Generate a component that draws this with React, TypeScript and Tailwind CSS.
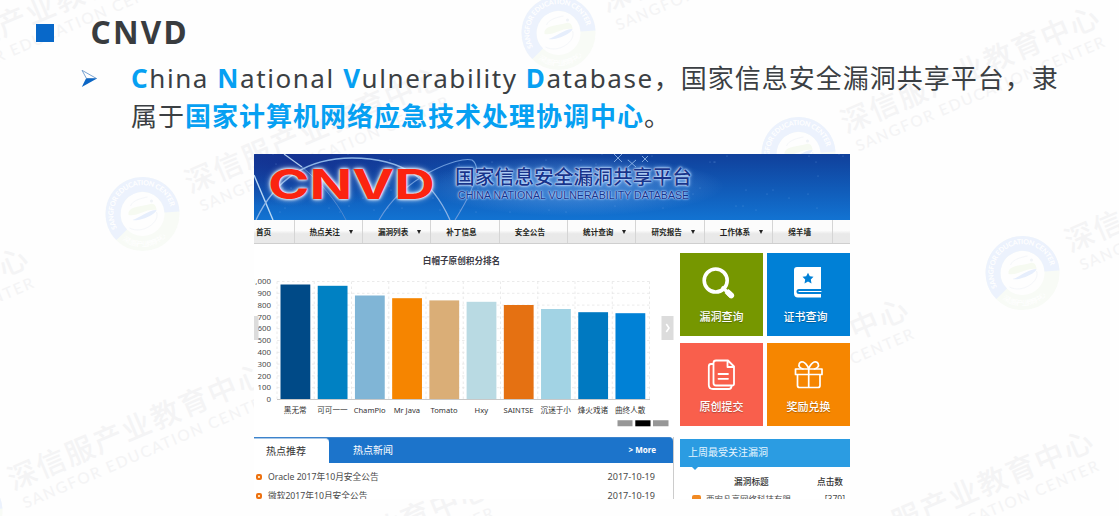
import React from "react";

const marks: [number, number][] = [
  [200, 178],
  [856, 118],
  [616, -3],
  [1080, 237],
  [23, 475],
  [-215, 359],
  [-73, 58],
  [665, 410],
  [850, 542],
  [245, 589],
];

function Watermark() {
  return (
    <svg className="absolute inset-0" width="1119" height="516" viewBox="0 0 1119 516">
      <defs>
        <path id="ring" d="M-23.3 17.5 A29 29 0 1 1 27.5 9" />
        <path id="ringLow" d="M-20 26 A33 33 0 0 0 30 13" />
      </defs>
      {marks.map(([x, y], i) => (
        <g key={i} transform={`translate(${x} ${y})`}>
          <g transform="translate(-57.5 36)">
            <circle r="29.5" fill="none" stroke="#f8fbf6" strokeWidth="15" />
            <path d="M-20.8 20.8 A29.5 29.5 0 1 1 29.5 -2" fill="none" stroke="#ecf2fd" strokeWidth="15" />
            <text fill="#fff" fontSize="7" fontWeight="700" fontFamily="Lato, sans-serif">
              <textPath href="#ring" textLength="98" startOffset="4">SANGFOR EDUCATION CENTER</textPath>
            </text>
            <text fill="#fff" fontSize="7" fontFamily="'Noto Sans CJK SC', sans-serif">
              <textPath href="#ringLow" textLength="48">深信服产业教育中心</textPath>
            </text>
            <path d="M-14 1C-15-8-2-7 8-10C13-11 14-6 14-4C4-6-5 3-14 1" fill="#f6faf1" />
            <path d="M-10 6C-4 8 13 1 14-4C6-4-3 4-10 6" fill="#e6eefc" />
            <path d="M14-2C18 8 0 21-13 14M-12-8C-10-14 0-16 5-17" fill="none" stroke="#f5f7fa" />
            <circle cx="9" cy="-13" r="1.5" fill="#f0f3f7" />
          </g>
          <g transform="rotate(-23.1)" fill="#f4f4f5">
            <text x="-15" y="10.5" fontSize="29" fontWeight="500" fontFamily="'Noto Sans CJK SC', sans-serif" textLength="277">
              深信服产业教育中心
            </text>
            <text x="-11" y="32" fontSize="15.5" fontWeight="500" fontFamily="Lato, sans-serif" textLength="269">
              SANGFOR EDUCATION CENTER
            </text>
          </g>
        </g>
      ))}
    </svg>
  );
}

function Key({ children }: { children: React.ReactNode }) {
  return <b className="font-bold text-[#06a0f2]">{children}</b>;
}

function Banner() {
  return (
    <div className="relative h-[66px] overflow-hidden bg-linear-to-b from-[#10409b] to-[#1273d2]">
      <svg className="absolute inset-0" width="596" height="66" fill="none">
        <defs>
          <radialGradient id="shade">
            <stop offset="0" stopColor="#16298a" stopOpacity=".7" />
            <stop offset="1" stopColor="#16298a" stopOpacity="0" />
          </radialGradient>
          <radialGradient id="glow">
            <stop offset="0.3" stopColor="#7fb4f2" stopOpacity=".42" />
            <stop offset="1" stopColor="#7fb4f2" stopOpacity="0" />
          </radialGradient>
        </defs>
        <ellipse cx="40" cy="8" rx="170" ry="45" fill="url(#shade)" />
        <ellipse cx="320" cy="32" rx="150" ry="30" fill="url(#glow)" />
        <path d="M0 21L19 66" stroke="#b9d8f5" strokeWidth="1.4" />
        <path d="M30 0L48 13" stroke="#b3cdee" strokeWidth="1.2" />
        <path d="M48 13C66 28 82 46 92 66" stroke="#5f8fd2" strokeWidth=".8" />
        <path d="M2 66C20 28 50 4 98 4C150 4 178 26 196 66" stroke="#8cb4e6" strokeWidth="1.3" />
        <path d="M125 66C150 22 205 2 218 6C230 14 216 42 201 66" stroke="#6c9bdc" strokeWidth="1.1" />
        <path d="M360 0L368 8M360 8L368 0M374 6L382 13M374 13L382 6M388 2L394 8M388 8L394 2" stroke="#9bc0ef" strokeWidth=".8" />
        {Array.from({ length: 75 }, (_, i) => (
          <circle key={i} cx={(i * i * 37 + i * 97) % 593} cy={(i * i * 13 + i * 41) % 62} r={0.5} fill="#8abcf2" opacity=".55" />
        ))}
      </svg>
      <div className="relative flex">
        <div className="w-[201px] pl-[14px] pt-[9px]">
          <div className="w-[118px] origin-left scale-x-[1.37] whitespace-nowrap font-['Inter'] text-[41px] font-bold leading-[42px] text-[#fb2410] [text-shadow:0_0_2px_#fff,0_0_3px_#fff,0_0_5px_#cfe5ff]">
            CNVD
          </div>
        </div>
        <div className="pt-[8px] text-[#17348c]">
          <div className="font-['Noto_Sans_CJK_SC'] text-[19.75px] font-medium leading-[27px] whitespace-nowrap [text-shadow:0_0_1px_#dcebff,0_0_2px_#cfe4ff,0_0_3px_#b9d8ff,0_0_5px_#8fc0ff]">
            国家信息安全漏洞共享平台
          </div>
          <div className="pl-[3px] font-['Liberation_Sans'] text-[10.65px] leading-[13px] whitespace-nowrap [text-shadow:0_0_1px_#c4dcff,0_0_2px_#b4d4ff,0_0_3px_#9cc8ff]">
            CHINA NATIONAL VULNERABILITY DATABASE
          </div>
        </div>
      </div>
    </div>
  );
}

const nav: [string, boolean][] = [
  ["热点关注", true],
  ["漏洞列表", true],
  ["补丁信息", false],
  ["安全公告", false],
  ["统计查询", true],
  ["研究报告", true],
  ["工作体系", true],
];

function Nav() {
  return (
    <div className="flex h-6 border-b border-[#cfcfcf] bg-linear-to-b from-[#fcfcfc] from-45% to-[#e9e9e9] to-60% font-['Noto_Sans_CJK_SC'] text-[7.6px] font-bold leading-[23px] text-[#231f20] whitespace-nowrap">
      <div className="w-[39.5px] pl-[2px]">首页</div>
      {nav.map(([label, arrow]) => (
        <div key={label} className="flex w-[68.4px] items-center border-l border-[#d5d5d5] pl-[15px]">
          {label}
          {arrow && <span className="ml-[9px] h-0 w-0 border-x-[2.5px] border-t-[4px] border-x-transparent border-t-[#222]" />}
        </div>
      ))}
      <div className="w-[61px] border-x border-[#d5d5d5] pl-[15px]">绵羊墙</div>
    </div>
  );
}

const bars: [string, number, string][] = [
  ["黑无常", 30.5, "#004a87"],
  ["可可一一", 31.8, "#0081c3"],
  ["ChamPio", 41.5, "#80b5d6"],
  ["Mr Java", 44.2, "#f68500"],
  ["Tomato", 46.4, "#daae77"],
  ["Hxy", 47.8, "#b9dae3"],
  ["SAINTSE", 51, "#e57112"],
  ["沉迷于小", 55, "#a2d3e4"],
  ["烽火戏诸", 58.2, "#0079c1"],
  ["曲终人散", 59.2, "#0081d6"],
];

const ticks = ["1,000", "900", "800", "700", "600", "500", "400", "300", "200", "100", "0"];

function Chart() {
  return (
    <svg width="426" height="193" viewBox="0 0 426 193" fontFamily="'Noto Sans', 'Noto Sans CJK SC', sans-serif">
      <text x="207.5" y="20" textAnchor="middle" fontSize="8.6" fontWeight="700" fill="#3b3b46">
        白帽子原创积分排名
      </text>
      <g transform="translate(0 10)">
        {ticks.map((t, i) => (
          <g key={t}>
            <path d={`M23 ${27.5 + i * 11.8}H396`} stroke="#e6e6e6" strokeWidth=".8" strokeDasharray="2.5 2.5" />
            <text x="17" y={30.2 + i * 11.8} fontSize="7.9" textAnchor="end" fill="#4a4a4a">
              {t}
            </text>
          </g>
        ))}
        {Array.from({ length: 11 }, (_, i) => (
          <path key={i} d={`M${23 + i * 37.25} 27.5V145.5`} stroke="#e6e6e6" strokeWidth=".8" strokeDasharray="2.5 2.5" />
        ))}
        {bars.map(([name, top, color], i) => (
          <g key={name}>
            <rect x={26.5 + i * 37.22} y={top} width="29.8" height={145.5 - top} fill={color} />
            <text x={41.2 + i * 37.22} y="158.5" fontSize="7.6" textAnchor="middle" fill="#333">
              {name}
            </text>
          </g>
        ))}
        <path d="M23 145.5H396" stroke="#c8c8c8" />
        <path d="M0 62H4.5V86H0Z M407.5 62H419.5V86H407.5Z" fill="#dcdcdc" />
        <path d="M412.3 70L415 74L412.3 78" fill="none" stroke="#fff" strokeWidth="1.6" />
        <path d="M363.5 166.3H378.5V172.3H363.5Z M399 166.3H414.5V172.3H399Z" fill="#979797" />
        <path d="M381.3 166.3H396.5V172.3H381.3Z" fill="#000" />
      </g>
    </svg>
  );
}

function Tile({ color, label, children }: { color: string; label: string; children: React.ReactNode }) {
  return (
    <div className={`flex h-[83px] flex-col items-center ${color}`}>
      <svg width="83" height="57" fill="none" stroke="#fff" strokeLinejoin="round" strokeLinecap="round">
        {children}
      </svg>
      <div className="text-[11px] font-medium leading-[14px] [text-shadow:0_1px_1px_rgba(0,0,0,0.3)]">{label}</div>
    </div>
  );
}

function Tiles() {
  return (
    <div className="grid w-[170px] grid-cols-[83px_83px] gap-x-1 gap-y-[7px] text-white">
      <Tile color="bg-[#769700]" label="漏洞查询">
        <circle cx="35.7" cy="27.5" r="11.5" strokeWidth="3.6" />
        <path d="M43 35L48 39.5" strokeWidth="3.6" />
        <path d="M46.5 38L52 43.2" strokeWidth="5.6" strokeLinecap="butt" />
        <path d="M49 40.3L51.3 42.5" strokeWidth="5.6" />
      </Tile>
      <Tile color="bg-[#0080d6] [&>div]:-translate-x-[3px]" label="证书查询">
        <path d="M30 14H54V36H32Q29.5 36 29.5 38.5T32 41H54V44.5H31Q27 44.5 27 40.5V17Q27 14 30 14Z" fill="#fff" stroke="none" />
        <path d="M32 38.5H54" strokeWidth="1.2" />
        <path d="M41 19.8L42.8 23.3L46.5 23.8L43.8 26.5L44.5 30.5L41 28.6L37.5 30.5L38.2 26.5L35.5 23.8L39.2 23.3Z" fill="#0080d6" stroke="none" />
      </Tile>
      <Tile color="bg-[#f95f4c]" label="原创提交">
        <path d="M36 17.5H48L54 23.5V41Q54 42.5 52 42.5H36Q33.5 42.5 33.5 40V20Q33.5 17.5 36 17.5Z M47.5 18V24H54" strokeWidth="1.8" />
        <path d="M33 21H31Q28.8 21 28.8 23.5V42Q28.8 46 33 46H49Q51 46 51.5 43.5M38.5 31H48M38.5 35.8H48" strokeWidth="1.8" />
      </Tile>
      <Tile color="bg-[#f68600]" label="奖励兑换">
        <path d="M28.5 26H55V31.5H28.5ZM30.5 31.5V42.5Q30.5 44.5 32.5 44.5H51Q53 44.5 53 42.5V31.5M41.7 26V44.5" strokeWidth="1.7" />
        <path d="M41.7 25.5C38 18 34 17.5 32.3 20.5C31 23.5 33 25 36 26M41.7 25.5C45.4 18 49.4 17.5 51.1 20.5C52.4 23.5 50.4 25 47.4 26" strokeWidth="1.7" />
      </Tile>
    </div>
  );
}

function News({ title }: { title: string }) {
  return (
    <div className="flex h-[18.5px] items-center pl-[1.5px] leading-[14px]">
      <span className="h-[6px] w-[6px] rounded-[2px] border-2 border-[#ee7110] bg-[#ffe2b8]" />
      <span className="ml-[6.5px] flex-1 text-[8.7px] text-[#4a4a4a]">{title}</span>
      <span className="pr-[18px] text-[9.1px] text-[#4a4a4a]">2017-10-19</span>
    </div>
  );
}

function Portal() {
  return (
    <div className="h-[344.5px] w-[596px] overflow-hidden bg-white">
      <Banner />
      <Nav />
      <div className="flex h-[193px]">
        <Chart />
        <div className="pt-[9px]">
          <Tiles />
        </div>
      </div>
      <div className="flex">
        <div className="h-[62px] w-[420px] border-r border-[#ccc]">
          <div className="flex h-[25.5px] items-center rounded-tr-[4px] border-t border-[#3c83cc] bg-[#1c74cb] text-[10px] leading-[24px] text-white">
            <div className="h-full w-[75px] rounded-tr-[4px] border-t border-[#a9c8e8] bg-white pl-[12px] text-[#333]">热点推荐</div>
            <div className="pl-[24px]">热点新闻</div>
            <div className="ml-auto pr-[17px] text-[8px] font-bold">&gt; More</div>
          </div>
          <div className="pt-[5.5px]">
            <News title="Oracle 2017年10月安全公告" />
            <News title="微软2017年10月安全公告" />
          </div>
        </div>
        <div className="ml-[6px] w-[170px] pt-[2px]">
          <div className="relative h-[28px] bg-[#2b9ce2] pl-[8px] text-[10px] leading-[26px] text-[#e8f6ff]">
            上周最受关注漏洞
            <span className="absolute left-[12px] top-[28px] border-x-[3px] border-t-[3px] border-x-transparent border-t-[#2b9ce2]" />
          </div>
          <div className="flex justify-between pl-[54px] pr-[7px] pt-[9px] text-[8.7px] font-medium leading-[12px] text-[#333]">
            <span>漏洞标题</span>
            <span>点击数</span>
          </div>
          <div className="mt-[5px] flex items-start pl-[12px] pr-[5px] text-[8.5px] leading-[12px] text-[#4a4a4a]">
            <span className="mt-[2px] h-[9px] w-[9px] rounded-[2px] bg-[#f18a24]" />
            <span className="ml-[5px] flex-1">西安凡高网络科技有限</span>
            <span>[379]</span>
          </div>
        </div>
      </div>
    </div>
  );
}

export default function App() {
  return (
    <main className="relative h-[516px] w-[1119px] overflow-hidden bg-[#fefefe] font-['Noto_Sans','Noto_Sans_CJK_SC',sans-serif] text-[#3b3f43]">
      <Watermark />
      <div className="relative">
        <div className="flex h-[60px] items-start pl-9">
          <span className="mt-[23.5px] h-[18px] w-[18px] bg-[#0868c9]" />
          <h1 className="ml-[36.5px] mt-[11.5px] text-[31.5px] font-bold leading-[40px] tracking-[2.2px] text-[#393c3f]">CNVD</h1>
        </div>
        <div className="flex h-[94px] pl-[81px]">
          <svg className="mt-[9px]" width="18" height="20">
            <path d="M1 1.3L15.5 9.5H5.5Z" fill="#fff" stroke="#6c9acc" strokeWidth=".9" />
            <path d="M5 9.5H16L.8 18Z" fill="#0b66c5" />
          </svg>
          <div className="ml-[32px] text-[26px] leading-[37.5px] tracking-[1px] whitespace-nowrap">
            <p>
              <span className="tracking-[1.57px]">
                <Key>C</Key>hina <Key>N</Key>ational <Key>V</Key>ulnerability <Key>D</Key>atabase
              </span>
              ，国家信息安全漏洞共享平台，隶
            </p>
            <p>
              属于<Key>国家计算机网络应急技术处理协调中心</Key>。
            </p>
          </div>
        </div>
        <div className="pl-[254px]">
          <Portal />
        </div>
      </div>
    </main>
  );
}
